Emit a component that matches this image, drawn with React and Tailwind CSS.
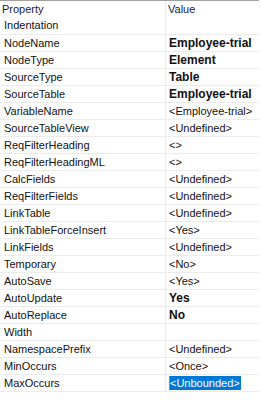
const rows = [
  ["NodeName", "Employee-trial", true],
  ["NodeType", "Element", true],
  ["SourceType", "Table", true],
  ["SourceTable", "Employee-trial", true],
  ["VariableName", "<Employee-trial>"],
  ["SourceTableView", "<Undefined>"],
  ["ReqFilterHeading", "<>"],
  ["ReqFilterHeadingML", "<>"],
  ["CalcFields", "<Undefined>"],
  ["ReqFilterFields", "<Undefined>"],
  ["LinkTable", "<Undefined>"],
  ["LinkTableForceInsert", "<Yes>"],
  ["LinkFields", "<Undefined>"],
  ["Temporary", "<No>"],
  ["AutoSave", "<Yes>"],
  ["AutoUpdate", "Yes", true],
  ["AutoReplace", "No", true],
  ["Width", ""],
  ["NamespacePrefix", "<Undefined>"],
  ["MinOccurs", "<Once>"],
  ["MaxOccurs", "<Unbounded>", false, true],
];

export default function App() {
  return (
    <div className="w-[262px] h-[400px] bg-white overflow-hidden text-[11px] leading-none whitespace-nowrap text-[#111] font-['Liberation_Sans',Arial,sans-serif]">
      <div className="w-[259px] border-t border-[#a0a0a0]">
        {/* header + category row share the value column */}
        <div className="flex border-b border-[#ececec]">
          <div className="w-[166px] border-r border-[#ececec]">
            <div className="h-[16px] pl-[2px] flex items-center text-[#1b1b3a]">Property</div>
            <div className="h-[17px] pl-[4px] flex items-center">Indentation</div>
          </div>
          <div className="flex-1">
            <div className="h-[16px] pl-[2px] flex items-center text-[#1b1b3a]">Value</div>
          </div>
        </div>
        {rows.map(([name, value, bold, selected]) => (
          <div key={name} className="flex h-[17px] border-b border-[#ececec]">
            <div className="w-[166px] border-r border-[#ececec] pl-[4px] flex items-center">{name}</div>
            <div className={`flex-1 pl-[3px] flex items-center ${bold ? "font-bold text-[12px]" : ""}`}>
              {selected ? (
                <span className="bg-[#0078d7] text-white border-l border-[#e07020] h-[14px] flex items-center pr-[1px]">{value}</span>
              ) : (
                value
              )}
            </div>
          </div>
        ))}
      </div>
    </div>
  );
}
